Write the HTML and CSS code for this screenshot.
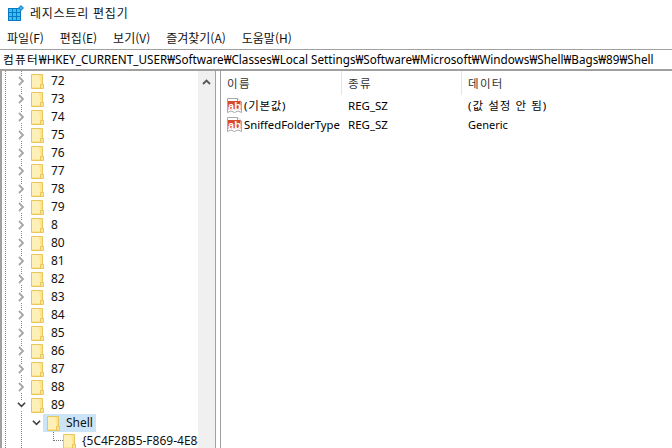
FILE: index.html
```html
<!DOCTYPE html>
<html lang="ko">
<head>
<meta charset="utf-8">
<title>레지스트리 편집기</title>
<link rel="stylesheet" href="styles.css">
</head>
<body>
<svg width="0" height="0" class="defs">
  <defs>
    <symbol id="folder" viewBox="0 0 13 15">
      <path d="M.5.5H11.5V10.5H12.5V14.5H.5Z" fill="#fde48f" stroke="#e8c65a"/>
      <path d="M1 1H8L10 13H1Z" fill="#fff0b8"/>
      <path d="M9.5 14V10.5H12" fill="none" stroke="#e8c65a"/>
    </symbol>
    <symbol id="ab" viewBox="0 0 15 15">
      <path d="M.5.5H10.5L14.5 4V14.5L11 13 7.5 14.5 4 13 .5 14.5Z" fill="#fff" stroke="#a8a8a8"/>
      <path d="M10.5.5V4H14.5" fill="#fff" stroke="#a8a8a8"/>
      <rect x="1" y="3" width="12.5" height="8.5" fill="#d84a2a"/>
    </symbol>
  </defs>
</svg>
<header class="titlebar">
  <svg class="appicon" width="18" height="16" viewBox="0 0 18 16">
    <rect x="0" y="3" width="13" height="13" fill="#0a78c2"/>
    <g fill="#35c0f0">
      <rect x="1" y="4" width="3" height="3"/><rect x="5" y="4" width="3" height="3"/><rect x="9" y="4" width="3" height="3"/>
      <rect x="1" y="8" width="3" height="3"/><rect x="5" y="8" width="3" height="3"/><rect x="9" y="8" width="3" height="3"/>
      <rect x="1" y="12" width="3" height="3"/><rect x="5" y="12" width="3" height="3"/><rect x="9" y="12" width="3" height="3"/>
    </g>
    <path d="M13 0l3 3-3 3-3-3Z" fill="#1a8fd8"/>
    <path d="M13 2l1 1-1 1-1-1Z" fill="#7fd6f7"/>
  </svg>
  <span class="title">레지스트리 편집기</span>
</header>
<nav class="menubar">
  <span class="menu">파일(F)</span>
  <span class="menu">편집(E)</span>
  <span class="menu">보기(V)</span>
  <span class="menu">즐겨찾기(A)</span>
  <span class="menu">도움말(H)</span>
</nav>
<div class="address"><span class="addr-root">컴퓨터</span>₩HKEY_CURRENT_USER₩Software₩Classes₩Local Settings₩Software₩Microsoft₩Windows₩Shell₩Bags₩89₩Shell</div>
<main class="panes">
  <section class="tree">
    <ul class="nodes">
      <li class="node"><svg class="chev" viewBox="0 0 9 10"><path d="M2 1l4 4-4 4"/></svg><svg class="folder"><use href="#folder"/></svg><span class="label">72</span></li>
      <li class="node"><svg class="chev" viewBox="0 0 9 10"><path d="M2 1l4 4-4 4"/></svg><svg class="folder"><use href="#folder"/></svg><span class="label">73</span></li>
      <li class="node"><svg class="chev" viewBox="0 0 9 10"><path d="M2 1l4 4-4 4"/></svg><svg class="folder"><use href="#folder"/></svg><span class="label">74</span></li>
      <li class="node"><svg class="chev" viewBox="0 0 9 10"><path d="M2 1l4 4-4 4"/></svg><svg class="folder"><use href="#folder"/></svg><span class="label">75</span></li>
      <li class="node"><svg class="chev" viewBox="0 0 9 10"><path d="M2 1l4 4-4 4"/></svg><svg class="folder"><use href="#folder"/></svg><span class="label">76</span></li>
      <li class="node"><svg class="chev" viewBox="0 0 9 10"><path d="M2 1l4 4-4 4"/></svg><svg class="folder"><use href="#folder"/></svg><span class="label">77</span></li>
      <li class="node"><svg class="chev" viewBox="0 0 9 10"><path d="M2 1l4 4-4 4"/></svg><svg class="folder"><use href="#folder"/></svg><span class="label">78</span></li>
      <li class="node"><svg class="chev" viewBox="0 0 9 10"><path d="M2 1l4 4-4 4"/></svg><svg class="folder"><use href="#folder"/></svg><span class="label">79</span></li>
      <li class="node"><svg class="chev" viewBox="0 0 9 10"><path d="M2 1l4 4-4 4"/></svg><svg class="folder"><use href="#folder"/></svg><span class="label">8</span></li>
      <li class="node"><svg class="chev" viewBox="0 0 9 10"><path d="M2 1l4 4-4 4"/></svg><svg class="folder"><use href="#folder"/></svg><span class="label">80</span></li>
      <li class="node"><svg class="chev" viewBox="0 0 9 10"><path d="M2 1l4 4-4 4"/></svg><svg class="folder"><use href="#folder"/></svg><span class="label">81</span></li>
      <li class="node"><svg class="chev" viewBox="0 0 9 10"><path d="M2 1l4 4-4 4"/></svg><svg class="folder"><use href="#folder"/></svg><span class="label">82</span></li>
      <li class="node"><svg class="chev" viewBox="0 0 9 10"><path d="M2 1l4 4-4 4"/></svg><svg class="folder"><use href="#folder"/></svg><span class="label">83</span></li>
      <li class="node"><svg class="chev" viewBox="0 0 9 10"><path d="M2 1l4 4-4 4"/></svg><svg class="folder"><use href="#folder"/></svg><span class="label">84</span></li>
      <li class="node"><svg class="chev" viewBox="0 0 9 10"><path d="M2 1l4 4-4 4"/></svg><svg class="folder"><use href="#folder"/></svg><span class="label">85</span></li>
      <li class="node"><svg class="chev" viewBox="0 0 9 10"><path d="M2 1l4 4-4 4"/></svg><svg class="folder"><use href="#folder"/></svg><span class="label">86</span></li>
      <li class="node"><svg class="chev" viewBox="0 0 9 10"><path d="M2 1l4 4-4 4"/></svg><svg class="folder"><use href="#folder"/></svg><span class="label">87</span></li>
      <li class="node"><svg class="chev" viewBox="0 0 9 10"><path d="M2 1l4 4-4 4"/></svg><svg class="folder"><use href="#folder"/></svg><span class="label">88</span></li>
      <li class="node"><svg class="chev open" viewBox="0 0 10 9"><path d="M1 2l4 4 4-4"/></svg><svg class="folder"><use href="#folder"/></svg><span class="label">89</span></li>
      <li class="node depth1"><svg class="chev open" viewBox="0 0 10 9"><path d="M1 2l4 4 4-4"/></svg><span class="selected"><svg class="folder"><use href="#folder"/></svg><span class="label">Shell</span></span></li>
      <li class="node depth2"><span class="dots"></span><svg class="folder"><use href="#folder"/></svg><span class="label">{5C4F28B5-F869-4E84-8E60-F11DB97C5CC7}</span></li>
    </ul>
    <div class="scrollbar"><svg class="arrow" width="9" height="6" viewBox="0 0 9 6"><path d="M1 5l3.5-3.5L8 5"/></svg></div>
  </section>
  <section class="list">
    <div class="row head">
      <span class="col c1 h">이름</span><span class="col c2 h">종류</span><span class="col c3">데이터</span>
    </div>
    <div class="row">
      <span class="col c1"><svg class="ab"><use href="#ab"/></svg><span class="abtext">ab</span><span class="ko-name">(기본값)</span></span><span class="col c2">REG_SZ</span><span class="col c3 ko-data">(값 설정 안 됨)</span>
    </div>
    <div class="row">
      <span class="col c1"><svg class="ab"><use href="#ab"/></svg><span class="abtext">ab</span><span class="en-name">SniffedFolderType</span></span><span class="col c2">REG_SZ</span><span class="col c3 en-data">Generic</span>
    </div>
  </section>
</main>
</body>
</html>
```
FILE: styles.css
```css
* { box-sizing: border-box; }
html, body { margin: 0; padding: 0; }
body {
  width: 672px;
  height: 448px;
  overflow: hidden;
  background: #fff;
  color: #000;
  font: 12px/18px "Noto Sans CJK KR", "Noto Sans", sans-serif;
  display: flex;
  flex-direction: column;
}
.defs { position: absolute; }
.titlebar {
  height: 25px;
  display: flex;
  align-items: center;
  padding: 1px 0 0 8px;
  flex: none;
}
.appicon { flex: none; }
.title { margin-left: 4px; font-size: 12px; letter-spacing: .75px; color: #111; }
.menubar {
  height: 24px;
  flex: none;
  display: flex;
  gap: 16px;
  padding: 1px 0 0 7px;
  align-items: center;
}
.menu { font-size: 12px; color: #111; }
.address {
  height: 22px;
  flex: none;
  border-top: 1px solid #a0a0a0;
  border-bottom: 2px solid #a0a0a0;
  padding-left: 3px;
  font-family: "Noto Sans", "Noto Sans CJK KR", sans-serif;
  font-size: 11.7px;
  line-height: 19px;
  white-space: nowrap;
  overflow: hidden;
}
.addr-root { letter-spacing: 1.2px; }
.panes { flex: 1; display: flex; min-height: 0; }
.tree {
  width: 216px;
  flex: none;
  display: flex;
  border-left: 2px solid #a0a0a0;
  border-right: 1px solid #a0a0a0;
  overflow: hidden;
  position: relative;
}
.nodes {
  list-style: none;
  margin: 0;
  padding: 1px 0 0;
  width: 196px;
  flex: none;
  overflow: hidden;
  background-image: linear-gradient(#888 50%, transparent 50%), linear-gradient(#888 50%, transparent 50%);
  background-size: 1px 2px, 1px 2px;
  background-repeat: repeat-y, repeat-y;
  background-position: 3px 0, 19px 0;
}
.node {
  height: 18px;
  display: flex;
  align-items: center;
  white-space: nowrap;
  padding-left: 15px;
}
.chev {
  width: 9px;
  height: 10px;
  flex: none;
  fill: none;
  stroke: #a6a6a6;
  stroke-width: 1.8;
  margin-right: 5px;
  background: #fff;
}
.chev.open { stroke: #404040; }
.folder { width: 13px; height: 15px; flex: none; }
.label { margin-left: 7px; font-family: "Noto Sans", sans-serif; font-size: 12px; color: #111; }
.depth1 { padding-left: 30px; }
.depth1 .chev { margin-right: 2px; }
.selected {
  display: flex;
  align-items: center;
  height: 18px;
  background: #cce4f8;
  padding: 0 0 0 4px;
  width: 53px;
  flex: none;
}
.selected .label { margin-left: 6px; }
.depth2 { padding-left: 51px; }
.depth2 .label { margin-left: 6px; }
.dots {
  width: 10px;
  height: 9px;
  margin: -9px 0 0 0;
  flex: none;
  border-left: 1px dotted #777;
  border-bottom: 1px dotted #777;
}
.scrollbar { width: 17px; flex: none; background: #f0f0f0; text-align: center; line-height: 0; padding-top: 8px; }
.arrow { fill: none; stroke: #555; stroke-width: 1.8; }
.list {
  flex: 1;
  margin-left: 4px;
  border-left: 1px solid #a0a0a0;
  min-width: 0;
}
.row { display: flex; height: 19px; align-items: center; padding-left: 1px; }
.head { height: 24px; color: #333; margin-bottom: 1px; }
.col { flex: none; white-space: nowrap; font-size: 11.5px; font-family: "Noto Sans", "Noto Sans CJK KR", sans-serif; }
.head .col { font-family: "Noto Sans CJK KR", sans-serif; letter-spacing: 1.3px; }
.h { border-right: 1px solid #e4e4e4; height: 24px; line-height: 24px; }
.c1 { width: 120px; position: relative; display: flex; align-items: center; padding-left: 5px; }
.c2 { width: 120px; padding-left: 6px; }
.c3 { padding-left: 6px; }
.ab { width: 15px; height: 15px; flex: none; margin-right: 2px; }
.abtext {
  position: absolute;
  left: 5px;
  top: 2px;
  width: 15px;
  text-align: center;
  font: bold 11px/15px "Liberation Sans", sans-serif;
  color: #fff;
}
.ko-name { letter-spacing: .7px; }
.en-name { font-size: 11.3px; }
.ko-data { letter-spacing: 1.05px; }
.en-data { font-size: 11px; }
```
